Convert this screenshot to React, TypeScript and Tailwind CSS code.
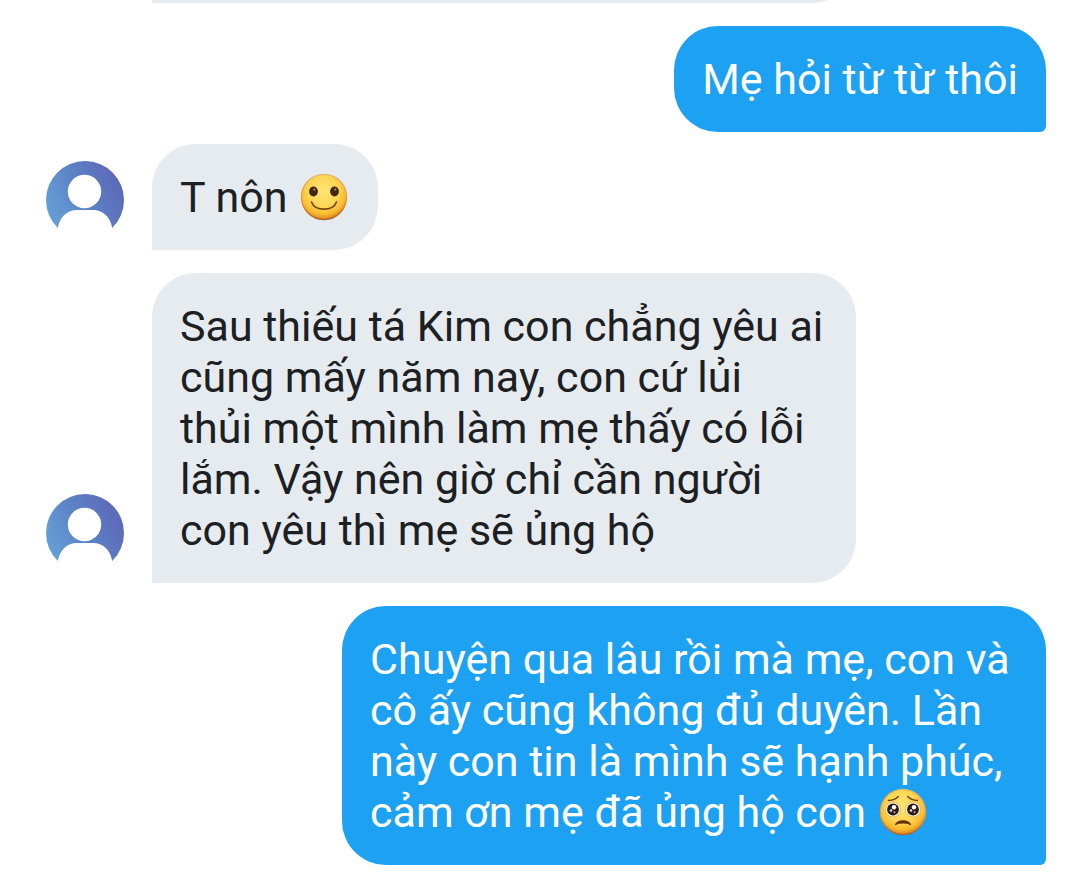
import type { ReactNode } from "react";

function Avatar() {
  return (
    <svg viewBox="0 0 78 78" className="mb-[11px] size-[78px] shrink-0" role="img" aria-label="Avatar">
      <defs>
        <linearGradient id="avatar-fill" x1="0" y1="0.75" x2="1" y2="0.25">
          <stop offset="0" stopColor="#66a3d9" />
          <stop offset="0.5" stopColor="#5c82c6" />
          <stop offset="1" stopColor="#5e66b6" />
        </linearGradient>
      </defs>
      <circle cx="39" cy="39" r="39" fill="url(#avatar-fill)" />
      <circle cx="38.5" cy="30.5" r="16.7" fill="#fff" />
      <path d="M12 78V66C14 56 21 49 31 49H47C57 49 64 56 66 66V78Z" fill="#fff" />
    </svg>
  );
}

function EmojiBase({ label, children }: { label: string; children: ReactNode }) {
  return (
    <svg viewBox="0 0 48 48" className="mx-0.5 inline-block size-12 align-[-9px]" role="img" aria-label={label}>
      <defs>
        <radialGradient id="face-fill" cx="0.48" cy="0.38" r="0.62">
          <stop offset="0" stopColor="#ffe575" />
          <stop offset="0.55" stopColor="#ffd653" />
          <stop offset="0.82" stopColor="#f9b92f" />
          <stop offset="1" stopColor="#d57e22" />
        </radialGradient>
        <linearGradient id="face-rim" x1="0" y1="0" x2="0" y2="1">
          <stop offset="0" stopColor="#dcb869" />
          <stop offset="0.6" stopColor="#d99a30" />
          <stop offset="1" stopColor="#a9632b" />
        </linearGradient>
      </defs>
      <circle cx="24" cy="24" r="22.600" fill="url(#face-fill)" stroke="url(#face-rim)" strokeWidth="1.200" />
      {children}
    </svg>
  );
}

function SmileEmoji() {
  return (
    <EmojiBase label="🙂">
      <ellipse cx="13.500" cy="18.500" rx="4.400" ry="4.900" fill="#42270c" />
      <ellipse cx="34.500" cy="18.500" rx="4.400" ry="4.900" fill="#42270c" />
      <circle cx="14.300" cy="16.500" r="1.100" fill="#b09a7e" />
      <circle cx="35.300" cy="16.500" r="1.100" fill="#b09a7e" />
      <path d="M11.500 29C15 38.500 33 38.500 36.500 29" fill="none" stroke="#75450f" strokeWidth="1.700" strokeLinecap="round" />
    </EmojiBase>
  );
}

function PleadingEmoji() {
  return (
    <EmojiBase label="🥺">
      {[14, 34].map((cx) => (
        <g key={cx}>
          <circle cx={cx} cy="21.500" r="7.600" fill="#fff6dc" stroke="#d9a13b" strokeWidth="0.700" />
          <circle cx={cx} cy="21.500" r="5.900" fill="#2b1b17" />
          <circle cx={cx + 1} cy="19.300" r="2.200" fill="#fff" />
          <circle cx={cx - 2} cy="22.500" r="1.300" fill="#e8e0df" />
          <circle cx={cx + 1.5} cy="24.200" r="1" fill="#b9aaa6" />
        </g>
      ))}
      <path d="M9.500 12.500C13.500 12.300 17.200 10.800 19.300 8.500M28.700 8.500C30.800 10.800 34.500 12.300 38.500 12.500" fill="none" stroke="#70420d" strokeWidth="1.500" strokeLinecap="round" />
      <path d="M16.500 36.500C19 31.400 29 31.400 31.500 36.500C28 34.500 20 34.500 16.500 36.500Z" fill="#66320b" stroke="#66320b" strokeWidth="1.100" strokeLinejoin="round" />
    </EmojiBase>
  );
}

function Received({ children }: { children: ReactNode }) {
  return (
    <li className="flex items-end gap-7">
      <Avatar />
      <p className="max-w-[704px] rounded-[44px] rounded-bl-none bg-[#e6ebf0] px-7 pt-7 pb-[27px] text-[#1c2022]">
        {children}
      </p>
    </li>
  );
}

function Sent({ children }: { children: ReactNode }) {
  return (
    <li className="flex justify-end">
      <p className="max-w-[704px] rounded-[44px] rounded-br-[6px] bg-[#1da1f2] px-7 pt-7 pb-[27px] text-white">
        {children}
      </p>
    </li>
  );
}

export default function App() {
  return (
    <main className="min-h-screen bg-white font-[Roboto,'Noto_Sans',sans-serif] text-[43px] leading-[51px]">
      <div className="flex h-[3px] flex-col justify-end overflow-hidden pl-[152px]" aria-hidden="true">
        <div className="h-[106px] w-full max-w-[704px] shrink-0 rounded-[44px] rounded-bl-none bg-[#e6ebf0]" />
      </div>
      <ul className="flex flex-col gap-[23px] pt-[23px] pr-[34px] pb-2 pl-[46px]">
        <li>
          <ul className="flex flex-col gap-3">
            <Sent>Mẹ hỏi từ từ thôi</Sent>
            <Received>
              T nôn <SmileEmoji />
            </Received>
          </ul>
        </li>
        <Received>
          Sau thiếu tá Kim con chẳng yêu ai cũng mấy năm nay, con cứ lủi
          <br />
          thủi một mình làm mẹ thấy có lỗi lắm. Vậy nên giờ chỉ cần người
          <br />
          con yêu thì mẹ sẽ ủng hộ
        </Received>
        <Sent>
          Chuyện qua lâu rồi mà mẹ, con và cô ấy cũng không đủ duyên. Lần này con tin là mình sẽ hạnh phúc, cảm ơn mẹ đã ủng hộ con <PleadingEmoji />
        </Sent>
      </ul>
    </main>
  );
}
